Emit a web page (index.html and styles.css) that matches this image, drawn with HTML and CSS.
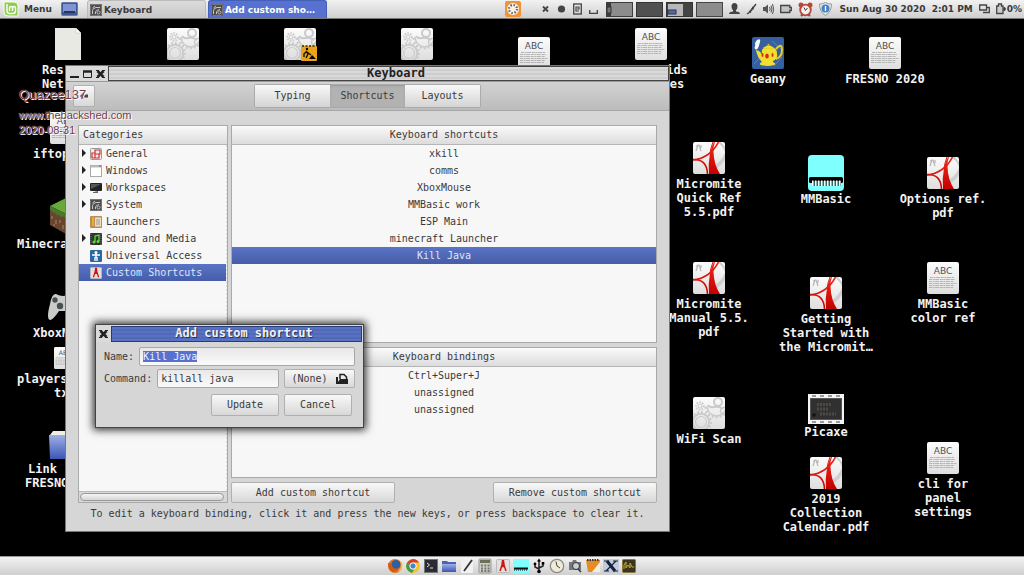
FILE: index.html
```html
<!DOCTYPE html>
<html lang="en">
<head>
<meta charset="utf-8">
<title>Keyboard</title>
<link rel="stylesheet" href="styles.css">
<script src="dialog.js" defer></script>
</head>
<body>
<svg class="defs" aria-hidden="true">
  <defs>
    <linearGradient id="tile" x1="0" y1="0" x2="0" y2="1"><stop offset="0" stop-color="#fcfcfc"/><stop offset="1" stop-color="#dedede"/></linearGradient>
    <linearGradient id="red" gradientUnits="userSpaceOnUse" x1="0" y1="0" x2="0" y2="32"><stop offset="0" stop-color="#ef2a1a"/><stop offset="1" stop-color="#c40000"/></linearGradient>
    <linearGradient id="blue" x1="0" y1="0" x2="0" y2="1"><stop offset="0" stop-color="#9fb0e6"/><stop offset="1" stop-color="#3c55b4"/></linearGradient>
    <clipPath id="tileclip"><rect width="32" height="32" rx="2"/></clipPath>
  </defs>
  <symbol id="abc" viewBox="0 0 32 32">
    <rect width="32" height="32" rx="2" fill="url(#tile)"/>
    <text x="16" y="12" text-anchor="middle" class="abc-text">ABC</text>
    <g stroke="#b4b4b4" stroke-width="1"><path d="M3 15.500h24M2 17.500h26M2 19.500h25M2 21.500h28M2 23.500h25M2 25.500h24" stroke-dasharray="3 .6 2 .5 4 .7"/></g>
  </symbol>
  <symbol id="gears" viewBox="0 0 32 32">
    <rect width="32" height="32" rx="2" fill="url(#tile)"/>
    <g clip-path="url(#tileclip)" fill="none" stroke="#cacaca">
      <circle cx="8" cy="25" r="5.500" stroke-width="1.200"/><circle cx="8" cy="25" r="8.300" stroke-width="2"/><circle cx="8" cy="25" r="10" stroke-width="1.800" stroke-dasharray="1.800 2.100"/>
      <circle cx="25" cy="5" r="4" stroke-width="2"/><path d="M14 9Q15 18 23 19Q30 19 33 12" stroke-width="1.600"/><path d="M12.500 10Q14 20 23 20.500Q30 20 34 15" stroke-width="2" stroke-dasharray="1.800 2.200"/><path d="M15 8Q17 11 21 10Q26 9 30 12" stroke-width="2"/>
      <circle cx="7" cy="9" r="2" stroke-width="1"/><circle cx="7" cy="9" r="3.800" stroke-width="2" stroke-dasharray="1.500 1.300"/><circle cx="31" cy="14" r="3.500" stroke-width="1.500"/>
    </g>
  </symbol>
  <symbol id="pdf" viewBox="0 0 32 32">
    <rect width="32" height="32" rx="2" fill="url(#tile)"/>
    <g clip-path="url(#tileclip)">
      <path d="M20 24Q28 20 32 11V18Q29 23 21 28ZM24 0Q30 4 32 10V5L28 0Z" fill="#cfcfcf"/>
      <path d="M3 9L5 3H6L8 9M4 3V6M8 3V6" fill="none" stroke="#b5b5b5" stroke-width="1.200"/>
      <path d="M0 18Q17 16 25.500 0" fill="none" stroke="url(#red)" stroke-width="1.600"/>
      <path d="M0 17.500Q14 17 14.500 32" fill="none" stroke="url(#red)" stroke-width="1.600"/>
      <path d="M17 11Q15 22 16 32H27Q21 23 20.500 10Q20 5 22 0H21Q18 5 17 11Z" fill="url(#red)"/>
      <path d="M17 11Q18 5 20 0" fill="none" stroke="#df2012" stroke-width="1"/>
    </g>
  </symbol>
  <symbol id="clockgear" viewBox="0 0 12 12">
    <rect width="12" height="12" rx="1" fill="#4e4e4e"/><rect x=".5" y=".5" width="11" height="11" rx="1" fill="none" stroke="#777"/>
    <path d="M2.500 10V6.500Q3 4 6 3.500H10M5.500 10V8Q6 6 9 5.500M2.500 4L5 2" fill="none" stroke="#c5c5c5" stroke-width="1"/><circle cx="8.500" cy="8.500" r="1.500" fill="none" stroke="#ccc" stroke-width=".8"/>
  </symbol>
  <symbol id="compass" viewBox="0 0 14 14">
    <rect x=".5" y=".5" width="13" height="13" rx="1" fill="#e0e0e0" stroke="#bbb"/>
    <path d="M7 3L4 12M7 3L10 12" stroke="#d01515" stroke-width="1.500" fill="none"/><path d="M7 1V4M5.500 7H8.500" stroke="#d01515" stroke-width="2.400"/><circle cx="7" cy="4" r="1.600" fill="#d01515"/>
  </symbol>
  <symbol id="mmb" viewBox="0 0 36 36">
    <rect width="36" height="36" rx="4" fill="#80ffff"/><rect x="1" y="22" width="34" height="6" rx="1.500" fill="#000"/>
    <path d="M4 28.500H33" stroke="#2a6a6a" stroke-width="5"/><path d="M4 28H33" stroke="#fff" stroke-width="6" stroke-dasharray="1.500 1.500"/><path d="M2 24H34" stroke="#000" stroke-width="3"/>
  </symbol>
  <symbol id="close" viewBox="0 0 9 10">
    <path d="M1.500 2L7.500 8M7.500 2L1.500 8" stroke="#222" stroke-width="2.600"/><path d="M0 1.500H3M6 1.500H9M0 8.500H3M6 8.500H9" stroke="#222" stroke-width="1.200"/>
  </symbol>
</svg>

<header class="panel panel-top">
  <button class="menu"><svg viewBox="0 0 16 16" width="16" height="16"><path d="M1 1H11Q15 1 15 5V15H5Q1 15 1 11Z" fill="#8ccc50" stroke="#f7fff0" stroke-width="1"/><path d="M4 3V10Q4 12.500 6.500 12.500H10Q12.500 12.500 12.500 10V7Q12.500 5.500 11 5.500Q9.500 5.500 9.500 7V10M9.500 7Q9.500 5.500 8 5.500Q6.500 5.500 6.500 7V10" fill="none" stroke="#fff" stroke-width="1.400"/></svg>Menu</button>
  <button class="show" aria-label="Show desktop"><svg viewBox="0 0 17 14" width="17" height="14"><rect x=".5" y=".5" width="16" height="13" rx="1" fill="#3e5792" stroke="#6c7ca8"/><rect x="2" y="2" width="13" height="8" fill="#8093d2"/><rect x="3" y="9" width="11" height="2" fill="#253660"/></svg></button>
  <nav class="tasks">
    <button class="task"><svg width="12" height="12"><use href="#clockgear"/></svg>Keyboard</button>
    <button class="task active"><svg width="12" height="12"><use href="#clockgear"/></svg>Add custom sho…</button>
  </nav>
  <div class="indicators">
    <svg class="update" viewBox="0 0 16 16" width="16" height="16"><rect width="16" height="16" rx="2" fill="#ef9334"/><circle cx="8" cy="8" r="6" fill="#f8f2e8"/><circle cx="8" cy="8" r="4" fill="none" stroke="#666" stroke-width="2.200" stroke-dasharray="1.500 1.650"/></svg>
    <svg viewBox="0 0 9 12" width="9" height="12"><path d="M2 3.500L7 8.500M7 3.500L2 8.500" stroke="#444" stroke-width="1.800"/></svg>
    <svg viewBox="0 0 9 12" width="9" height="12"><circle cx="4.500" cy="6" r="3.600" fill="#444"/></svg>
    <svg viewBox="0 0 9 12" width="9" height="12"><rect x=".7" y="1" width="7.600" height="10" fill="none" stroke="#444" stroke-width="1.300"/><path d="M6 8H3V4H6V6H4" fill="none" stroke="#444" stroke-width="1.200"/></svg>
    <svg viewBox="0 0 9 12" width="9" height="12"><path d="M.7 7V10.300H8.300V7" fill="none" stroke="#444" stroke-width="1.300"/></svg>
  </div>
  <div class="workspaces">
    <button aria-label="Workspace 1"><svg viewBox="0 0 27 15" width="27" height="15"><rect width="27" height="15" fill="#3c3c3c"/><rect x="5" y="1" width="21" height="13" fill="#8c8c8c"/><rect x="1" y="5" width="4" height="6" fill="#777" stroke="#333"/></svg></button>
    <button aria-label="Workspace 2"><svg viewBox="0 0 27 15" width="27" height="15"><rect x=".5" y=".5" width="26" height="14" fill="#505050" stroke="#333"/></svg></button>
    <button aria-label="Workspace 3"><svg viewBox="0 0 27 15" width="27" height="15"><rect x=".5" y=".5" width="26" height="14" fill="#444" stroke="#333"/><rect x="2" y="2" width="15" height="12" fill="#b7b7b7"/><rect x="2" y="8" width="8" height="4" fill="#5068b4" stroke="#334"/></svg></button>
    <button aria-label="Workspace 4"><svg viewBox="0 0 27 15" width="27" height="15"><rect x=".5" y=".5" width="26" height="14" fill="#8c8c8c" stroke="#444"/></svg></button>
  </div>
  <div class="tray">
    <svg viewBox="0 0 11 12" width="11" height="12"><path d="M5.500 0Q8.500 0 8.500 3.500Q8.500 6 7 7V8.500Q11 8.500 11 11H0Q0 8.500 4 8.500V7Q2.500 6 2.500 3.500Q2.500 0 5.500 0Z" fill="#444"/></svg>
    <svg viewBox="0 0 11 12" width="11" height="12"><path d="M1 11L4 9L10 1M3 8L5 9.500" stroke="#444" stroke-width="1.400" fill="none"/><path d="M3 9L7 3L8 6Z" fill="#444"/></svg>
    <svg viewBox="0 0 11 12" width="11" height="12"><path d="M0 4H2L5 1.500V10.500L2 8H0Z" fill="#555"/><path d="M6.500 4Q8 6 6.500 8M8 2.500Q10 6 8 9.500M9.500 1Q12 6 9.500 11" stroke="#555" fill="none"/></svg>
    <svg viewBox="0 0 12 12" width="12" height="12"><path d="M.7 2.500H9.800V4.500H11.300V7.500H9.800V9.500H.7Z" fill="#c4c4c4" stroke="#444" stroke-width="1.300"/></svg>
    <svg viewBox="0 0 15 15" width="15" height="15"><circle cx="3" cy="3" r="2.500" fill="#b5483c"/><circle cx="12" cy="3" r="2.500" fill="#b5483c"/><path d="M3 14L5 12M12 14L10 12" stroke="#943" stroke-width="2"/><circle cx="7.500" cy="8" r="5.300" fill="#f5eeea" stroke="#b5483c" stroke-width="1.800"/><path d="M6 5.500L7.500 8.500L9.500 6" fill="none" stroke="#444"/></svg>
    <svg viewBox="0 0 13 14" width="13" height="14"><path d="M6.500 .5Q9 2 12.500 2Q12.500 10 6.500 13.500Q.5 10 .5 2Q4 2 6.500 .5Z" fill="#e6e6e6" stroke="#999"/><circle cx="6.500" cy="6.500" r="4" fill="#4283c4"/><path d="M6.500 4V9" stroke="#fff" stroke-width="1.300"/></svg>
    <time class="clock"><span>Sun Aug 30 2020</span><span>2:01 PM</span></time>
    <svg viewBox="0 0 11 12" width="11" height="12"><path d="M.7 2H7.500V7H.7ZM4 9.500H10.300V4.500H8" fill="none" stroke="#444" stroke-width="1.300"/></svg>
    <span class="power"><svg viewBox="0 0 10 12" width="10" height="12"><path d="M.7 3H2.500V1H5.500V3H7V10.500H.7ZM8.500 4V8M7 6H10" fill="#ccc" stroke="#444" stroke-width="1.300"/></svg>0%</span>
  </div>
</header>

<main class="desktop">
  <a href="#" class="item cut at-res"><svg width="32" height="32" viewBox="0 0 32 32" class="in-12"><path d="M1 0H22L27 5V32H1Z" fill="#e8e9e3"/><path d="M22 0L27 5H22Z" fill="#fff" stroke="#bbb" stroke-width=".5"/></svg><span>Res<br>Net</span></a>
  <a href="#" class="item at-g1" aria-label="Launcher"><svg width="32" height="32"><use href="#gears"/></svg></a>
  <a href="#" class="item at-g2" aria-label="Launcher"><svg width="34" height="33" viewBox="0 0 34 33"><use href="#gears" width="32" height="32"/><rect x="17" y="18" width="16" height="15" rx="1" fill="#e9a41c"/><path d="M18 18H32" stroke="#382500" stroke-width="1.500" stroke-dasharray="2 1.500"/><circle cx="23" cy="21" r="1.200"/><path d="M22 23L24 26L22 30M22 24L20 26V29M23 24L27 27" fill="none" stroke="#211600" stroke-width="1.500"/><path d="M25 31L28 27L32 31Z"/></svg></a>
  <a href="#" class="item at-g3" aria-label="Launcher"><svg width="32" height="32"><use href="#gears"/></svg></a>
  <a href="#" class="item at-a1" aria-label="Text file"><svg width="32" height="32"><use href="#abc"/></svg></a>
  <a href="#" class="item at-a2" aria-label="Text file"><svg width="32" height="32"><use href="#abc"/></svg></a>
  <span class="item at-ids"><span>ids<br>es</span></span>
  <a href="#" class="item cut at-iftop"><svg width="32" height="32" class="in-17"><use href="#abc"/></svg><span>iftop</span></a>
  <a href="#" class="item cut at-mine"><svg width="32" height="36" viewBox="0 0 32 36" class="in-33"><path d="M0 8L16 0L32 8L16 16Z" fill="#68a83d"/><path d="M0 8L16 16V36L0 27Z" fill="#66462f"/><path d="M32 8L16 16V36L32 27Z" fill="#4e3522"/><path d="M0 8L16 16V20L12 18V20L8 16V18L4 14V15L0 12Z" fill="#477a2b"/><path d="M2 18V21M6 22V26M10 22V25M13 27V31M4 26V28" stroke="#8b6547" stroke-width="2"/></svg><span>Minecraf</span></a>
  <a href="#" class="item cut at-xbox"><svg width="32" height="32" viewBox="0 0 32 32" class="in-14"><path d="M3 13Q5 2 9 3Q16 7 23 3Q27 2 30 14Q33 28 29 29Q26 29 21 20H12Q6 29 3 29Q-1 28 3 13Z" fill="#c9ccc8"/><circle cx="8" cy="9" r="2.700" fill="#465050"/><circle cx="13" cy="15" r="3.200" fill="#465050"/></svg><span>XboxM</span></a>
  <a href="#" class="item cut at-players"><svg width="22" height="22" class="in-37"><use href="#abc"/></svg><span>players<br><span class="in-37">tx</span></span></a>
  <a href="#" class="item cut at-link"><svg width="32" height="28" viewBox="0 0 32 28" class="in-24"><path d="M1 4L4 0H20V8H1Z" fill="#eeeee2"/><path d="M0 4H32V28H1Z" fill="url(#blue)"/></svg><span><span class="in-3">Link</span><br>FRESNO</span></a>

  <a href="#" class="item at-geany"><svg width="32" height="32" viewBox="0 0 32 32"><rect width="32" height="32" rx="2" fill="#365f9f"/><path d="M2 27L9 20M20 4L29 12M22 29L30 20" stroke="#5c83b8" fill="none"/><path d="M5 3Q9 1 8 5T6 11Q4 14 2.500 11Q4 8 3 6Z" fill="#fff"/><path d="M24 12Q30 5 30 13Q30 20 24 22" fill="none" stroke="#e8cc24" stroke-width="2"/><path d="M4 13L7 14L10 17Q9 12 12 11H22Q25 12 25 17Q26 22 21 24V25Q25 27 22 28Q16 30 9 28Q6 27 10 25Q5 20 4 13Z" fill="#f2de2d"/><path d="M11 11Q17 6 22 11Z" fill="#ffe94a" stroke="#c9a814" stroke-width=".5"/><circle cx="16.500" cy="8" r="1.200" fill="#d6ae16"/><g fill="#d22c18"><ellipse cx="10.500" cy="18" rx="1" ry="2"/><ellipse cx="15" cy="19" rx="1.800" ry="2.500"/><ellipse cx="20.500" cy="18" rx="1" ry="2"/></g></svg><span>Geany</span></a>
  <a href="#" class="item at-fresno"><svg width="32" height="32"><use href="#abc"/></svg><span>FRESNO 2020</span></a>
  <a href="#" class="item at-quick"><svg width="32" height="32"><use href="#pdf"/></svg><span>Micromite<br>Quick Ref<br>5.5.pdf</span></a>
  <a href="#" class="item big at-mmbasic"><svg width="36" height="36"><use href="#mmb"/></svg><span>MMBasic</span></a>
  <a href="#" class="item at-options"><svg width="32" height="32"><use href="#pdf"/></svg><span>Options ref.<br>pdf</span></a>
  <a href="#" class="item at-manual"><svg width="32" height="32"><use href="#pdf"/></svg><span>Micromite<br>Manual 5.5.<br>pdf</span></a>
  <a href="#" class="item at-getting"><svg width="32" height="32"><use href="#pdf"/></svg><span>Getting<br>Started with<br>the Micromit…</span></a>
  <a href="#" class="item at-color"><svg width="32" height="32"><use href="#abc"/></svg><span>MMBasic<br>color ref</span></a>
  <a href="#" class="item at-wifi"><svg width="32" height="32"><use href="#gears"/></svg><span>WiFi Scan</span></a>
  <a href="#" class="item big at-picaxe"><svg width="36" height="30" viewBox="0 0 36 30"><rect width="36" height="30" fill="#f5f5f5"/><path d="M4 2H34M4 28H34" stroke="#999" stroke-width="2" stroke-dasharray="4 4"/><rect x="2.500" y="4.500" width="31" height="21" fill="#303030" stroke="#555"/><path d="M9 10.500H23M9 15H21M12 20H28" stroke="#4e4945" stroke-width="3" stroke-dasharray="2 1"/><circle cx="6" cy="21" r="1.800" fill="#111"/></svg><span>Picaxe</span></a>
  <a href="#" class="item at-2019"><svg width="32" height="32"><use href="#pdf"/></svg><span>2019<br>Collection<br>Calendar.pdf</span></a>
  <a href="#" class="item at-cli"><svg width="32" height="32"><use href="#abc"/></svg><span>cli for<br>panel<br>settings</span></a>

  <section class="window" aria-label="Keyboard">
    <div class="titlebar">
      <div class="controls">
        <button aria-label="Minimize"><svg viewBox="0 0 9 10" width="9" height="10"><path d="M0 8H9" stroke="#222" stroke-width="2"/></svg></button>
        <button aria-label="Maximize"><svg viewBox="0 0 9 10" width="9" height="10"><path d="M.5 2V8.500H8.500V2" fill="none" stroke="#222"/><path d="M0 2.500H9" stroke="#222" stroke-width="2.500"/></svg></button>
        <button aria-label="Close"><svg width="9" height="10"><use href="#close"/></svg></button>
      </div>
      <h1 class="title">Keyboard</h1>
    </div>
    <div class="toolbar">
      <button class="btn back" aria-label="Back"><svg viewBox="0 0 10 10" width="10" height="10"><path d="M1 5L5 1V3.500H9V6.500H5V9Z" fill="#444"/></svg></button>
      <div class="tabs"><button>Typing</button><button class="on">Shortcuts</button><button>Layouts</button></div>
    </div>
    <div class="content">
      <div class="panes">
        <div class="box categories">
          <div class="head">Categories</div>
          <ul>
            <li class="more"><svg width="12" height="12" viewBox="0 0 12 12"><rect x=".5" y=".5" width="11" height="11" rx="1" fill="#eee" stroke="#999"/><path d="M5 2H10V6H5ZM2 5H5V10H2ZM5 6H9V10H5Z" fill="none" stroke="#d03030" stroke-width="1.200"/></svg>General</li>
            <li class="more"><svg width="12" height="12" viewBox="0 0 12 12"><rect x=".5" y=".5" width="11" height="11" fill="#fff" stroke="#aaa"/><path d="M1 1.500H11" stroke="#bbb" stroke-width="2"/><path d="M9 1H11" stroke="#c44"/></svg>Windows</li>
            <li class="more"><svg width="12" height="12" viewBox="0 0 12 12"><rect y="1" width="12" height="8" rx="1" fill="#222"/><path d="M1 2H11L1 7Z" fill="#555"/><path d="M4 9H8V11H3V10H9" fill="#666"/></svg>Workspaces</li>
            <li class="more"><svg width="12" height="12"><use href="#clockgear"/></svg>System</li>
            <li><svg width="12" height="12" viewBox="0 0 12 12"><rect width="12" height="12" rx="1" fill="#b98d59"/><rect x="5" y="1.500" width="6" height="9" fill="#eadfc8"/><path d="M6 4H10M6 6H10M6 8H10" stroke="#998"/><path d="M3 1V10" stroke="#f2a932" stroke-width="2"/></svg>Launchers</li>
            <li class="more"><svg width="12" height="12" viewBox="0 0 12 12"><rect width="12" height="12" rx="1" fill="#2a352b"/><path d="M5 9V3L9 2V8" fill="none" stroke="#64d834" stroke-width="1.300"/><circle cx="4" cy="9" r="1.500" fill="#64d834"/><circle cx="8" cy="8.500" r="1.500" fill="#64d834"/><path d="M1 1V12M11 1V12" stroke="#778" stroke-dasharray="1 1"/></svg>Sound and Media</li>
            <li><svg width="12" height="12" viewBox="0 0 12 12"><rect width="12" height="12" rx="1" fill="#2b67a2"/><circle cx="6" cy="2.500" r="1.500" fill="#fff"/><path d="M2 5H10M6 4V8M5 7V11M7 7V11" stroke="#fff" stroke-width="1.400"/></svg>Universal Access</li>
            <li class="sel"><svg width="12" height="12"><use href="#compass"/></svg>Custom Shortcuts</li>
          </ul>
          <div class="scroll"><i></i></div>
        </div>
        <div class="lists">
          <div class="box"><table>
            <thead><tr><th>Keyboard shortcuts</th></tr></thead>
            <tbody><tr><td>xkill</td></tr><tr><td>comms</td></tr><tr><td>XboxMouse</td></tr><tr><td>MMBasic work</td></tr><tr><td>ESP Main</td></tr><tr><td>minecraft Launcher</td></tr><tr class="sel"><td>Kill Java</td></tr></tbody>
          </table></div>
          <div class="box"><table>
            <thead><tr><th>Keyboard bindings</th></tr></thead>
            <tbody><tr><td>Ctrl+Super+J</td></tr><tr><td>unassigned</td></tr><tr><td>unassigned</td></tr></tbody>
          </table></div>
          <div class="actions"><button class="btn">Add custom shortcut</button><button class="btn">Remove custom shortcut</button></div>
        </div>
      </div>
      <p class="hint">To edit a keyboard binding, click it and press the new keys, or press backspace to clear it.</p>
    </div>
  </section>

  <form class="dialog" role="dialog" aria-label="Add custom shortcut">
    <div class="titlebar">
      <div class="controls"><button type="button" aria-label="Close"><svg width="9" height="10"><use href="#close"/></svg></button></div>
      <h2 class="title">Add custom shortcut</h2>
    </div>
    <div class="fields">
      <div class="row"><label for="name">Name:</label><input id="name" type="text" value="Kill Java"></div>
      <div class="row"><label for="command">Command:</label><input id="command" type="text" value="killall java"><button type="button" class="btn file">(None)<svg viewBox="0 0 12 12" width="12" height="12"><path d="M4 6V1.500H8L10.500 4V6" fill="none" stroke="#222" stroke-width="1.500"/><path d="M0 4H2V9L4 6H12V11H0Z" fill="#222"/></svg></button></div>
      <div class="row end"><button type="button" class="btn">Update</button><button type="button" class="btn">Cancel</button></div>
    </div>
  </form>

  <div class="watermark"><p class="who">Quazee137</p><p>www.thebackshed.com</p><p>2020-08-31</p></div>
</main>

<footer class="panel panel-bottom">
  <button aria-label="Firefox"><svg viewBox="0 0 16 16"><circle cx="8" cy="8" r="7" fill="#e5751c"/><circle cx="9" cy="6.500" r="4.500" fill="#2c5fa5"/><path d="M1 5Q5 5 5 8Q7 12 12 10Q10 14 6 14Q1 12 1 5Z" fill="#d25a12"/><path d="M14 4Q16 9 12 13" stroke="#f7b938" stroke-width="1.500" fill="none"/></svg></button>
  <button aria-label="Chrome"><svg viewBox="0 0 16 16"><circle cx="8" cy="8" r="7" fill="#f0c52d"/><path d="M8 8L2 4.500Q5 1 8 1Q12 1 14 4.500H8Z" fill="#d93c2c"/><path d="M2 4.500Q-1 12 7 15L10 10L8 8Z" fill="#3f9d4a"/><circle cx="8" cy="8" r="3.200" fill="#4384cf" stroke="#fff"/></svg></button>
  <button aria-label="Terminal"><svg viewBox="0 0 16 16"><rect x="1.500" y="1.500" width="13" height="13" fill="#2b2b35" stroke="#777"/><path d="M4 5L6.500 7L4 9M7 10H10" fill="none" stroke="#ddd"/></svg></button>
  <button aria-label="Files"><svg viewBox="0 0 16 16"><path d="M1 3H6L7 4H15V14H1Z" fill="#4a64b5"/><path d="M1 6H15V14H1Z" fill="url(#blue)"/></svg></button>
  <button aria-label="Text editor"><svg viewBox="0 0 16 16"><rect x="2" y="1" width="12" height="14" rx="1" fill="#f1f1f1"/><path d="M13 2L5 13" stroke="#333" stroke-width="1.800"/></svg></button>
  <button aria-label="Calculator"><svg viewBox="0 0 16 16"><rect x="2" y="1" width="12" height="14" rx="1" fill="#d0cdc1" stroke="#999"/><rect x="3" y="2" width="10" height="3" fill="#687055"/><path d="M4 7.500H13M4 10.500H13M4 13H13" stroke="#777" stroke-width="2" stroke-dasharray="2 1.300"/></svg></button>
  <button aria-label="Xkill"><svg viewBox="0 0 16 16"><use href="#compass" x="1" y="1" width="14" height="14"/></svg></button>
  <button aria-label="MMBasic"><svg viewBox="0 0 16 16"><rect width="16" height="14" y="1" fill="#80ffff"/><path d="M1 10.500H15" stroke="#111" stroke-width="2"/><path d="M1 12H15" stroke="#111" stroke-dasharray="1 1"/></svg></button>
  <button aria-label="USB"><svg viewBox="0 0 16 16"><path d="M8 2V13M8 11L4 9V6M8 10L12 8V5" fill="none" stroke="#222" stroke-width="1.500"/><path d="M6 3.500L8 .5L10 3.500Z"/><circle cx="8" cy="13.500" r="1.800"/><circle cx="4" cy="6" r="1.400"/><rect x="10.700" y="4" width="2.600" height="2.600"/></svg></button>
  <button aria-label="Clock"><svg viewBox="0 0 16 16"><circle cx="8" cy="8" r="6.700" fill="#f0ead8" stroke="#918c80" stroke-width="1.300"/><path d="M7 3.500L8 8L11 10" fill="none" stroke="#444"/></svg></button>
  <button aria-label="Screenshot"><svg viewBox="0 0 16 16"><path d="M2 4H5L6 2H9L10 4H14V12H2Z" fill="#777"/><circle cx="9" cy="8" r="3.500" fill="#c5d1d8" stroke="#333"/><path d="M11 11L14 14" stroke="#333" stroke-width="1.500"/></svg></button>
  <button aria-label="Notes"><svg viewBox="0 0 16 16"><path d="M1 2H15V14H3Z" fill="#e58d22"/><path d="M7 14L15 4V14Z" fill="#f4eee0"/><path d="M2 2H14" stroke="#333" stroke-width="2" stroke-dasharray="1.500 1"/></svg></button>
  <button aria-label="X"><svg viewBox="0 0 16 16"><rect width="16" height="14" y="1" fill="#c3cbd9"/><path d="M4 3L12 13" stroke="#15203f" stroke-width="3"/><path d="M13 3L3 13M1 3H6M10 3H15M1 13H6M10 13H15" stroke="#15203f" stroke-width="1.200"/></svg></button>
  <button aria-label="Monitor"><svg viewBox="0 0 16 16"><rect x="1.500" y="1.500" width="13" height="13" rx="1" fill="#39351f" stroke="#8b7a3b"/><path d="M3 11V7L5 4V10L7 7L9 10V5L11 9H13" fill="none" stroke="#c8aa38"/></svg></button>
</footer>
</body>
</html>
```
FILE: styles.css
```css
* { box-sizing: border-box; }
html, body { height: 100%; }
body {
  margin: 0;
  display: flex;
  flex-direction: column;
  background: #000;
  color: #3a3a3a;
  font: 10px/14px "DejaVu Sans Mono", monospace;
  overflow: hidden;
}
button, input { font: inherit; color: inherit; margin: 0; padding: 0; border: 0; background: none; }
svg { display: block; flex: none; }
a { color: inherit; text-decoration: none; }
h1, h2, p, ul { margin: 0; padding: 0; }
.defs { position: absolute; width: 0; height: 0; }
.abc-text { font: 9px "DejaVu Sans", sans-serif; fill: #505050; }

.panel {
  display: flex;
  align-items: center;
  flex: none;
  height: 19px;
  background: linear-gradient(#f2f2f2, #cfcfcf);
  font: bold 9px/14px "DejaVu Sans", sans-serif;
}
.panel-top { padding: 0 2px 0 3px; border-bottom: 1px solid #777; }
.panel-bottom { justify-content: center; gap: 2px; border-top: 1px solid #999; }
.panel-bottom svg { width: 16px; height: 16px; }
.menu { display: flex; align-items: center; gap: 5px; white-space: nowrap; }
.show { margin-left: 9px; }
.tasks { display: flex; gap: 2px; margin-left: 9px; }
.task {
  display: flex;
  align-items: center;
  gap: 2px;
  width: 119px;
  height: 18px;
  padding: 0 2px;
  border: 1px solid #bbb;
  border-bottom: 0;
  border-radius: 3px 3px 0 0;
  background: linear-gradient(#dcdcdc, #c6c6c6);
  white-space: nowrap;
}
.task.active { background: #5671cf; border-color: #4460b8; color: #fff; }
.indicators { display: flex; align-items: center; gap: 7px; margin-left: auto; }
.update { margin-right: 13px; }
.workspaces { display: flex; gap: 3px; margin: 0 6px 0 8px; }
.tray { display: flex; align-items: center; gap: 6px; }
.clock { display: flex; gap: 6px; margin-left: 2px; }
.power { display: flex; align-items: center; gap: 1px; }

.desktop { position: relative; flex: 1; min-height: 0; overflow: hidden; }
.item {
  position: absolute;
  display: flex;
  flex-direction: column;
  align-items: center;
  gap: 3px;
  width: 110px;
  color: #f2f2f2;
  font: bold 12px/14px "DejaVu Sans Mono", monospace;
  text-align: center;
  white-space: nowrap;
}
.item.big { gap: 1px; }
.item.cut { align-items: flex-start; text-align: left; }
.in-3 { margin-left: 3px; }
.in-12 { margin-left: 12px; }
.in-14 { margin-left: 14px; }
.in-17 { margin-left: 17px; }
.in-24 { margin-left: 24px; }
.in-33 { margin-left: 33px; }
.in-37 { margin-left: 37px; }
.at-res { left: 42px; top: 9px; }
.at-g1 { left: 128px; top: 9px; }
.at-g2 { left: 246px; top: 9px; }
.at-g3 { left: 362px; top: 9px; }
.at-a1 { left: 479px; top: 18px; }
.at-a2 { left: 596px; top: 9px; }
.at-ids { left: 622px; top: 44px; }
.at-iftop { left: 33px; top: 93px; }
.at-mine { left: 17px; top: 179px; }
.at-xbox { left: 33px; top: 272px; }
.at-players { left: 17px; top: 328px; }
.at-link { left: 25px; top: 412px; }
.at-geany { left: 713px; top: 18px; }
.at-fresno { left: 830px; top: 18px; }
.at-quick { left: 654px; top: 123px; }
.at-mmbasic { left: 771px; top: 136px; }
.at-options { left: 888px; top: 138px; }
.at-manual { left: 654px; top: 243px; }
.at-getting { left: 771px; top: 258px; }
.at-color { left: 888px; top: 243px; }
.at-wifi { left: 654px; top: 378px; }
.at-picaxe { left: 771px; top: 375px; }
.at-2019 { left: 771px; top: 438px; }
.at-cli { left: 888px; top: 423px; }

.window {
  position: absolute;
  left: 65px;
  right: 354px;
  top: 46px;
  bottom: 24px;
  display: flex;
  flex-direction: column;
  border: 1px solid #777;
  background: #d6d6d6;
}
.titlebar { display: flex; flex: none; height: 15px; background: #dadada; }
.controls { display: flex; align-items: center; gap: 4px; padding: 0 3px 0 4px; }
.title {
  flex: 1;
  margin: 0;
  padding-left: 15px;
  border: 1px solid #444;
  background: repeating-linear-gradient(#d9d9d9 0 2px, #cdcdcd 2px 4px);
  color: #222;
  font: bold 12px/12px "DejaVu Sans Mono", monospace;
  text-align: center;
}
.toolbar {
  display: grid;
  grid-template-columns: 1fr auto 1fr;
  align-items: center;
  flex: none;
  height: 30px;
  padding: 0 7px;
  border-top: 1px solid #999;
  border-bottom: 1px solid #a6a6a6;
  background: linear-gradient(#d2d2d2, #bcbcbc);
}
.btn {
  display: flex;
  align-items: center;
  justify-content: center;
  height: 21px;
  border: 1px solid #b0b0b0;
  border-radius: 2px;
  background: linear-gradient(#f8f8f8, #d8d8d8);
}
.back { width: 22px; height: 22px; }
.tabs { display: flex; border: 1px solid #aaa; border-radius: 2px; }
.tabs button { width: 75px; height: 22px; background: linear-gradient(#f8f8f8, #d4d4d4); }
.tabs .on { background: #b2b2b2; box-shadow: inset 0 1px 2px #999; }
.content { display: flex; flex-direction: column; flex: 1; min-height: 0; padding: 14px 12px 10px; }
.panes { display: flex; gap: 3px; flex: 1; min-height: 0; }
.box { border: 1px solid #a9a9a9; background: #f7f7f7; overflow: hidden; min-height: 0; }
.categories { display: flex; flex-direction: column; flex: 0 0 150px; }
.head, th {
  height: 19px;
  padding: 0 4px;
  border-bottom: 1px solid #b5b5b5;
  background: linear-gradient(#fafafa, #dcdcdc);
  font-weight: normal;
  line-height: 18px;
}
.head { flex: none; }
.categories ul { flex: 1; list-style: none; border-right: 2px dotted #ddd; margin-right: -1px; }
.categories li { position: relative; display: flex; align-items: center; gap: 4px; height: 17px; padding-left: 11px; white-space: nowrap; }
.more::before {
  content: "";
  position: absolute;
  left: 3px;
  top: 4px;
  border-left: 4px solid #222;
  border-top: 4px solid transparent;
  border-bottom: 4px solid transparent;
}
.sel { background: linear-gradient(#5a74c5, #465da9); color: #dfe6fa; }
.scroll { flex: none; height: 11px; padding: 1px 3px 1px 1px; border-top: 1px solid #bbb; background: #d8d8d8; }
.scroll i { display: block; height: 8px; border: 1px solid #999; border-radius: 4px; background: linear-gradient(#f5f5f5, #d5d5d5); }
.lists { flex: 1; min-width: 0; display: grid; grid-template-rows: 5fr 3fr auto; gap: 4px; }
table { width: 100%; border-collapse: separate; border-spacing: 0; text-align: center; }
td { height: 17px; padding: 0; }
.actions { display: flex; justify-content: space-between; }
.actions .btn { width: 164px; }
.hint { padding-top: 4px; text-align: center; white-space: nowrap; }

.dialog {
  position: absolute;
  left: 95px;
  top: 305px;
  width: 269px;
  border: 1px solid #444;
  background: #d6d6d6;
  box-shadow: 0 0 8px 2px rgba(0, 0, 0, .8);
}
.dialog .titlebar { height: 17px; padding: 1px 1px 0 0; }
.dialog .controls { padding: 0 3px; }
.dialog .title { border-color: #283c7d; background: repeating-linear-gradient(#5872c2 0 2px, #5069b8 2px 4px); color: #eef2ff; line-height: 13px; text-shadow: 1px 1px 0 #333; }
.fields { display: flex; flex-direction: column; gap: 3px; padding: 5px 8px 11px; }
.row { display: flex; align-items: center; gap: 5px; }
.row input {
  flex: 1;
  min-width: 0;
  height: 19px;
  padding: 0 3px;
  border: 1px solid #a8a8a8;
  border-radius: 2px;
  outline: 0;
  background: linear-gradient(#e8e8e8, #fafafa);
}
input::selection { background: #5671cf; color: #eef2ff; }
.file { width: 71px; height: 19px; gap: 8px; }
.row.end { justify-content: flex-end; padding: 3px 3px 0 0; }
.row.end .btn { width: 68px; height: 22px; }

.watermark {
  position: absolute;
  left: 19px;
  top: 67px;
  color: #74393f;
  font: 11px/15px "Liberation Sans", Arial, sans-serif;
  text-shadow: 1px 1px 0 #fff, 0 0 1px #fff;
  pointer-events: none;
}
.watermark .who { font-size: 13px; line-height: 17px; padding-bottom: 5px; }
```
FILE: dialog.js
```js
const nameField = document.getElementById("name");
nameField.focus();
nameField.select();
```
